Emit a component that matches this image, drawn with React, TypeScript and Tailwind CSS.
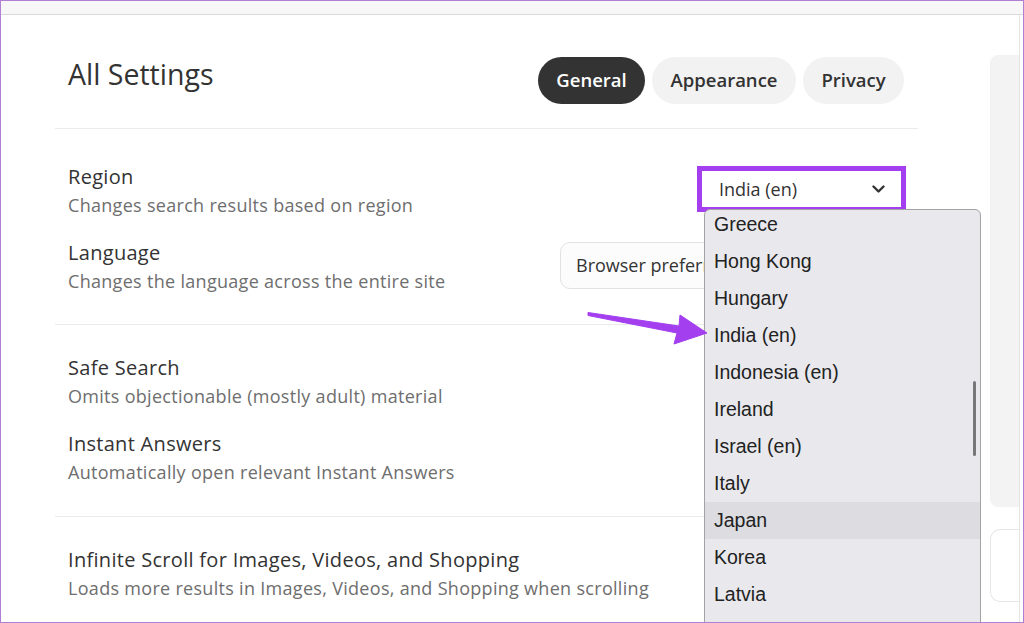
const countries = [
  "Greece",
  "Hong Kong",
  "Hungary",
  "India (en)",
  "Indonesia (en)",
  "Ireland",
  "Israel (en)",
  "Italy",
  "Japan",
  "Korea",
  "Latvia",
];

function SettingText({ title, desc }: { title: string; desc: string }) {
  return (
    <div>
      <p className="text-[20px] leading-[28px] tracking-[0.3px] text-[#333]">{title}</p>
      <p className="text-[18px] leading-[28px] tracking-[0.3px] text-[#6e6e6e]">{desc}</p>
    </div>
  );
}

function Chevron() {
  return (
    <svg width="13" height="8" viewBox="0 0 13 8" fill="none">
      <polyline points="1.5,1.5 6.5,6.5 11.5,1.5" stroke="#333" strokeWidth="2.4" strokeLinecap="round" strokeLinejoin="round" />
    </svg>
  );
}

export default function App() {
  return (
    <div className="relative h-[623px] w-[1024px] overflow-hidden border border-[#b07fd4] bg-white font-['Open_Sans',sans-serif] text-[#333]">
      <div className="h-[14px] border-b border-[#d9d9d9] bg-[#f7f7f7]" />

      <div className="flex">
        <main className="ml-[54px] w-[863px] shrink-0">
          {/* header */}
          <div className="flex items-start justify-between pb-[24px] pl-[13px] pr-[14px] pt-[42px]">
            <h1 className="text-[28.5px] leading-[34px] text-[#333]">All Settings</h1>
            <div className="flex gap-[7px] text-[18.5px] font-semibold">
              <button className="flex h-[47px] w-[107px] items-center justify-center rounded-full bg-[#333] pb-[2px] text-white">General</button>
              <button className="flex h-[47px] w-[144px] items-center justify-center rounded-full bg-[#f2f2f2] pb-[2px] text-[#333]">Appearance</button>
              <button className="flex h-[47px] w-[101px] items-center justify-center rounded-full bg-[#f2f2f2] pb-[2px] text-[#333]">Privacy</button>
            </div>
          </div>

          {/* region + language */}
          <section className="border-t border-[#ebebeb] pb-[29px] pl-[13px] pr-[12px] pt-[34px]">
            <div className="flex items-start justify-between">
              <SettingText title="Region" desc="Changes search results based on region" />
              <div className="mt-[3px] flex h-[46px] w-[209px] items-center justify-between border-[5px] border-[#a43ff0] bg-white pl-[17px] pr-[16px]">
                <span className="text-[18px] text-[#333]">India (en)</span>
                <Chevron />
              </div>
            </div>
            <div className="mt-[20px] flex items-start justify-between">
              <SettingText title="Language" desc="Changes the language across the entire site" />
              <div className="mt-[3px] flex h-[47px] w-[346px] items-center rounded-[10px] border border-[#e2e2e2] bg-[#fcfcfc] px-[15px] text-[18px] text-[#333]">
                Browser preferred language
              </div>
            </div>
          </section>

          {/* safe search + instant answers */}
          <section className="border-t border-[#ebebeb] pb-[30px] pl-[13px] pr-[12px] pt-[29px]">
            <SettingText title="Safe Search" desc="Omits objectionable (mostly adult) material" />
            <div className="mt-[20px]">
              <SettingText title="Instant Answers" desc="Automatically open relevant Instant Answers" />
            </div>
          </section>

          {/* infinite scroll */}
          <section className="border-t border-[#ebebeb] pl-[13px] pr-[12px] pt-[29px]">
            <SettingText
              title="Infinite Scroll for Images, Videos, and Shopping"
              desc="Loads more results in Images, Videos, and Shopping when scrolling"
            />
          </section>
        </main>

        {/* partially visible side column */}
        <aside className="ml-[72px] w-[29px] shrink-0 pt-[40px]">
          <div className="h-[452px] rounded-l-[8px] bg-[#f3f3f3]" />
          <div className="mt-[22px] h-[73px] rounded-l-[10px] border border-r-0 border-[#e6e6e6] bg-white" />
        </aside>
        <div className="h-[610px] w-px bg-[#e4e4e4]" />
      </div>

      {/* open dropdown list */}
      <div className="absolute left-[703px] top-[208px] h-[430px] w-[277px] overflow-hidden rounded-t-[6px] border border-[#a3a3a3] bg-[#e9e9ed] font-['Liberation_Sans',Arial,sans-serif]">
        <ul className="-mt-[4px]">
          {countries.map((c) => (
            <li
              key={c}
              className={`flex h-[37px] items-center pl-[9px] text-[19.5px] text-[#222] ${c === "Japan" ? "bg-[#dcdce1]" : ""}`}
            >
              {c}
            </li>
          ))}
        </ul>
        <div className="absolute right-[4px] top-[171px] h-[75px] w-[3px] rounded-full bg-[#777]" />
      </div>

      {/* annotation arrow */}
      <svg className="absolute left-[579px] top-[299px]" width="140" height="60" viewBox="0 0 140 60">
        <polygon
          points="8,12.5 99,26 100,15 127,33 94,44 97,33 8,15.5"
          fill="#a43ff0"
          stroke="#a43ff0"
          strokeWidth="1"
          strokeLinejoin="round"
        />
      </svg>
    </div>
  );
}
